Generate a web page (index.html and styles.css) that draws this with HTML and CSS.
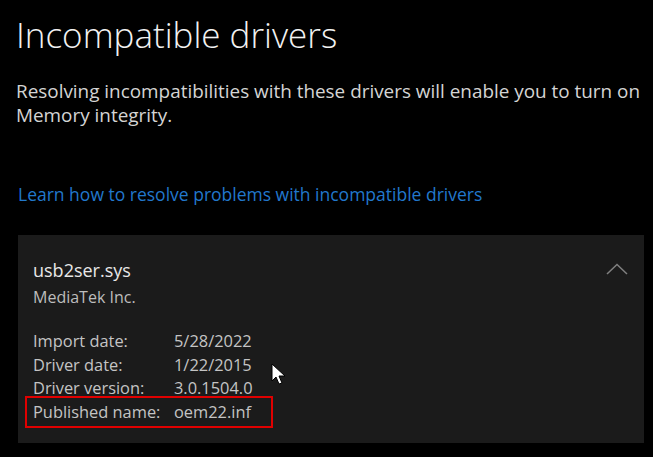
FILE: index.html
```html
<!DOCTYPE html>
<html>
<head>
<meta charset="utf-8">
<link rel="stylesheet" href="styles.css">
</head>
<body>
<div class="page">
  <h1 class="title">Incompatible drivers</h1>
  <p class="desc">Resolving incompatibilities with these drivers will enable you to turn on Memory integrity.</p>
  <a class="link" href="#">Learn how to resolve problems with incompatible drivers</a>
  <div class="card">
    <div class="card-head">
      <div>
        <div class="driver-name">usb2ser.sys</div>
        <div class="vendor">MediaTek Inc.</div>
      </div>
      <svg class="chevron" width="22" height="12" viewBox="0 0 22 12"><path d="M1 11 L11 1.5 L21 11" fill="none" stroke="#808080" stroke-width="1.5"/></svg>
    </div>
    <div class="details">
      <div class="row"><span class="label">Import date:</span><span class="value">5/28/2022</span></div>
      <div class="row"><span class="label">Driver date:</span><span class="value">1/22/2015</span></div>
      <div class="row"><span class="label">Driver version:</span><span class="value">3.0.1504.0</span></div>
      <div class="row highlight"><span class="label">Published name:</span><span class="value">oem22.inf</span></div>
    </div>
  </div>
  <svg class="cursor" width="16" height="24" viewBox="0 0 16 24"><path d="M1 1 L1 18 L5 14 L8 21 L11 20 L8 13 L14 13 Z" fill="#ffffff" stroke="#000000" stroke-width="1"/></svg>
</div>
</body>
</html>
```

FILE: styles.css
```css
html, body {
  margin: 0;
  padding: 0;
  background: #000000;
}
.page {
  position: relative;
  width: 653px;
  height: 457px;
  overflow: hidden;
  padding-left: 16px;
  box-sizing: border-box;
  font-family: "Open Sans", "Noto Sans", sans-serif;
}
.title {
  margin: 0;
  padding-top: 13px;
  font-size: 35px;
  font-weight: 300;
  line-height: 44px;
  color: #f2f2f2;
}
.desc {
  margin: 22px 0 0 0;
  font-size: 18.9px;
  line-height: 24px;
  color: #d4d4d4;
  width: 634px;
}
.link {
  display: block;
  margin-top: 56px;
  margin-left: 2px;
  font-size: 17.5px;
  line-height: 22px;
  color: #2278cc;
  text-decoration: none;
}
.card {
  margin-top: 30px;
  margin-left: 2px;
  width: 626px;
  height: 208px;
  background: #1b1b1b;
  box-sizing: border-box;
  padding: 23px 15px 0 15px;
}
.card-head {
  display: flex;
  justify-content: space-between;
  align-items: flex-start;
}
.driver-name {
  font-size: 18px;
  line-height: 24px;
  color: #e8e8e8;
}
.vendor {
  font-size: 16px;
  line-height: 22px;
  color: #bdbdbd;
  margin-top: 4px;
}
.chevron {
  margin-top: 5px;
  margin-right: 1px;
}
.details {
  margin-top: 21px;
}
.row {
  display: flex;
  font-size: 16.4px;
  line-height: 23.5px;
  color: #c4c4c4;
}
.label {
  width: 141px;
}
.highlight {
  width: 248px;
  margin-top: -3.5px;
  margin-left: -8px;
  padding-left: 6px;
  border: 2px solid #e00000;
  box-sizing: border-box;
  line-height: 28px;
}
.cursor {
  position: absolute;
  left: 271px;
  top: 363px;
}
```
